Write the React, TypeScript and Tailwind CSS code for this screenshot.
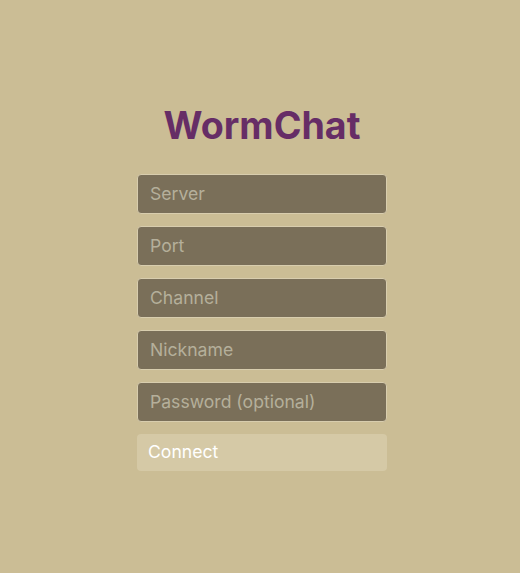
export default function App() {
  const fields = ['Server', 'Port', 'Channel', 'Nickname', 'Password (optional)'];

  return (
    <div className="flex h-screen w-full items-center justify-center bg-[#cbbd95] font-['Inter',sans-serif]">
      <form className="ml-[4px] flex w-[250px] flex-col gap-3" onSubmit={(e) => e.preventDefault()}>
        <h1 className="mb-[13px] text-center text-[37.6px] leading-[46px] font-bold text-[#662d66]">WormChat</h1>
        {fields.map((f) => (
          <input
            key={f}
            type={f.startsWith('Password') ? 'password' : 'text'}
            placeholder={f}
            className="h-10 w-full rounded-[4px] border border-[#d8cdae] bg-[#7a6f59] px-3 text-[17.6px] text-white outline-none placeholder:text-[#b5af9b]"
          />
        ))}
        <button
          type="submit"
          className="h-[37px] w-full rounded-[4px] bg-[#d5c9a6] px-[11px] text-left text-[17.6px] text-white"
        >
          Connect
        </button>
      </form>
    </div>
  );
}
